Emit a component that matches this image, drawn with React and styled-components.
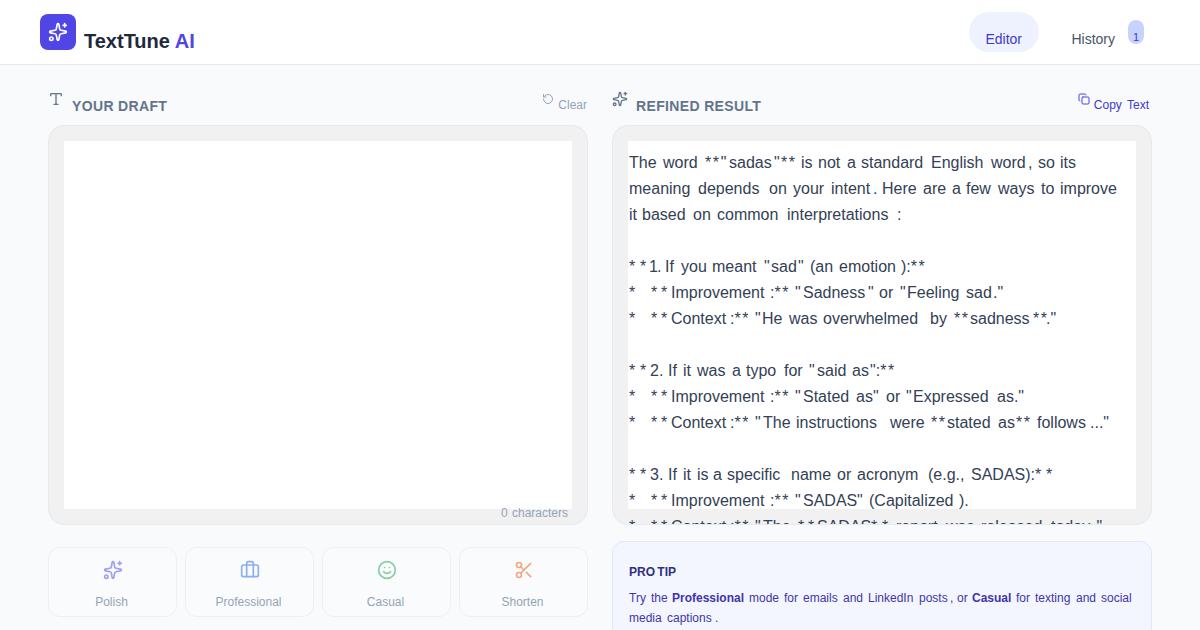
import styled, { createGlobalStyle } from 'styled-components';
import {
  Copy,
  RotateCcw,
  Scissors,
  Smile,
  Sparkles,
  Type,
} from 'lucide-react';

// every run of text is [offset from the line start, text]
const bullet = [
  [0, '*   '],
  [21.3, '*'],
  [31.3, '*'],
];
const numbered = [
  [0, '*'],
  [10.4, '*'],
];
const improvement = [...bullet, [42, 'Improvement'], [141, ':** '], [166, '"']];
const context = [...bullet, [42, 'Context'], [101, ':** '], [126, '"']];

const resultLines = [
  [[0, 'The '], [34, 'word '], [76, '**"'], [99.5, 'sadas'], [144.3, '"'], [151.7, '** '], [171.7, 'is '], [188.3, 'not '], [217.4, 'a '], [231.2, 'standard '], [301.7, 'English '], [361.3, 'word'], [398.6, ', '], [408.5, 'so '], [430.3, 'its']],
  [[0, 'meaning '], [69, 'depends '], [139.8, 'on '], [164, 'your '], [201.3, 'intent'], [244, '. '], [252.7, 'Here '], [294, 'are '], [322.7, 'a '], [336.5, 'few '], [368.3, 'ways '], [412, 'to '], [430.3, 'improve']],
  [[0, 'it '], [13, 'based '], [64, 'on '], [88, 'common '], [157.7, 'interpretations'], [267.5, ':']],
  [],
  [...numbered, [20, '1'], [27.3, '. '], [35.6, 'If '], [51.2, 'you '], [82.7, 'meant '], [134.7, '"'], [142, 'sad'], [169, '" '], [181, '(an '], [210, 'emotion'], [271.5, '):**']],
  [...improvement, [174, 'Sadness'], [239, '" '], [250, 'or '], [271, '"'], [277.7, 'Feeling '], [336.8, 'sad'], [364, '."']],
  [...context, [133, 'He '], [159.6, 'was '], [194, 'overwhelmed '], [301, 'by '], [324.7, '**'], [340.2, 'sadness'], [403.7, '**'], [417, '."']],
  [],
  [...numbered, [20.8, '2. '], [39, 'If '], [53.4, 'it '], [68, 'was '], [102.4, 'a '], [116.4, 'typo '], [155, 'for '], [179.7, '"'], [187.5, 'said '], [223, 'as'], [240.5, '":**']],
  [...improvement, [174, 'Stated '], [227, 'as'], [244, '" '], [256.4, 'or '], [276.5, '"'], [283.7, 'Expressed '], [367.4, 'as."']],
  [...context, [134, 'The '], [166.6, 'instructions '], [260.3, 'were '], [302, '**'], [318, 'stated '], [369, 'as'], [386.2, '** '], [407.6, 'follows'], [460.3, '..."']],
  [],
  [...numbered, [20.8, '3. '], [39, 'If '], [53.4, 'it '], [67.4, 'is '], [84, 'a '], [98, 'specific '], [161.5, 'name '], [208, 'or '], [227.7, 'acronym '], [298.4, '(e.g., '], [342, 'SADAS):'], [405.2, '*'], [416.6, '*']],
  [...improvement, [174, 'SADAS'], [227.5, '" '], [239.5, '(Capitalized'], [329.5, ').']],
  [...context, [134, 'The '], [168.2, '*'], [178.3, '*'], [187.8, 'SADAS'], [242, '*'], [252.6, '* '], [266.7, 'report '], [316.4, 'was '], [352, 'released '], [421.6, 'today'], [462.5, '."']],
];

const tipLines = [
  [[0, 'Try '], [22, 'the '], [43, 'Professional ', true], [119.4, 'mode '], [155, 'for '], [174, 'emails '], [214, 'and '], [238.5, 'LinkedIn '], [289.2, 'posts'], [320.5, ', '], [327.3, 'or '], [342.5, 'Casual ', true], [386.6, 'for '], [406, 'texting '], [447, 'and '], [472, 'social']],
  [[0, 'media '], [37.7, 'captions'], [85.8, '.']],
];

const actions = [
  { label: 'Polish', icon: Sparkles, color: '#4f46e5' },
  { label: 'Professional', icon: Suitcase, color: '#2563eb' },
  { label: 'Casual', icon: Smile, color: '#16a34a' },
  { label: 'Shorten', icon: Scissors, color: '#ea580c' },
];

function Suitcase({ size, color }) {
  return (
    <svg
      width={size}
      height={size}
      viewBox="0 0 24 24"
      fill="none"
      stroke={color}
      strokeWidth="2"
      strokeLinecap="round"
      strokeLinejoin="round"
    >
      <rect x="2" y="6" width="20" height="14" rx="2" />
      <path d="M16 20V4a2 2 0 0 0-2-2h-4a2 2 0 0 0-2 2v16" />
    </svg>
  );
}

const TextLine = ({ runs }) => (
  <Line>
    {runs.map(([x, text, strong], i) => {
      const next = runs[i + 1];
      return (
        <Run
          key={i}
          as={strong ? 'strong' : 'span'}
          style={next && { width: Math.ceil(next[0]) - Math.ceil(x) }}
        >
          {text
            .split(/(\*\*)/)
            .map((part, j) =>
              part === '**' ? <Stars key={j}>{part}</Stars> : part
            )}
        </Run>
      );
    })}
  </Line>
);

const App = () => {
  return (
    <>
      <GlobalStyle />
      <Header>
        <Brand>
          <Logo>
            <Sparkles size={20} />
          </Logo>
          <BrandName>
            TextTune <span>AI</span>
          </BrandName>
        </Brand>
        <Nav>
          <NavItem $active>Editor</NavItem>
          <NavItem>
            History
            <Badge>1</Badge>
          </NavItem>
        </Nav>
      </Header>
      <Main>
        <Column>
          <PanelHeader>
            <Type size={16} />
            <h2>Your Draft</h2>
            <PanelAction>
              <RotateCcw size={12} />
              <span>Clear</span>
            </PanelAction>
          </PanelHeader>
          <Panel>
            <Sheet />
            <CharCount>0 characters</CharCount>
          </Panel>
          <Actions>
            {actions.map(({ label, icon: Icon, color }) => (
              <ActionButton key={label}>
                <Icon size={20} color={color} />
                <span>{label}</span>
              </ActionButton>
            ))}
          </Actions>
        </Column>
        <Column>
          <PanelHeader>
            <Sparkles size={16} />
            <h2>Refined Result</h2>
            <PanelAction $primary>
              <Copy size={12} />
              <span>Copy Text</span>
            </PanelAction>
          </PanelHeader>
          <Panel>
            <Sheet>
              {resultLines.map((runs, i) => (
                <TextLine key={i} runs={runs} />
              ))}
            </Sheet>
          </Panel>
          <Tip>
            <h3>PRO TIP</h3>
            {tipLines.map((runs, i) => (
              <TextLine key={i} runs={runs} />
            ))}
          </Tip>
        </Column>
      </Main>
    </>
  );
};

export default App;

const GlobalStyle = createGlobalStyle`
  * {
    box-sizing: border-box;
    margin: 0;
    padding: 0;
  }
  body {
    background-color: #f8fafc;
    font-family: 'Liberation Sans', Arial, sans-serif;
    color: #1e293b;
    height: 630px;
    overflow: hidden;
  }
  svg {
    display: block;
    flex-shrink: 0;
  }
`;

const Header = styled.header`
  display: flex;
  justify-content: space-between;
  align-items: flex-start;
  height: 65px;
  padding: 0 40px;
  background-color: #fff;
  border-bottom: 1px solid #e2e8f0;
`;

const Brand = styled.div`
  display: flex;
  gap: 8px;
  padding-top: 14px;
`;

const Logo = styled.div`
  display: grid;
  place-items: center;
  width: 36px;
  height: 36px;
  border-radius: 8px;
  background-color: #4f46e5;
  color: #fff;
`;

const BrandName = styled.h1`
  padding-top: 13px;
  font-size: 20px;
  line-height: 28px;
  color: #1e293b;
  > span {
    color: #4f46e5;
  }
`;

const Nav = styled.nav`
  display: flex;
  gap: 16px;
  padding-top: 12px;
`;

const NavItem = styled.div`
  display: flex;
  min-width: 70px;
  height: 40px;
  padding: 17px 16px 0;
  border-radius: 20px;
  font-size: 14px;
  line-height: 20px;
  white-space: nowrap;
  color: ${({ $active }) => ($active ? '#4338ca' : '#475569')};
  background-color: ${({ $active }) => ($active ? '#eef2ff' : 'transparent')};
`;

const Badge = styled.span`
  width: 16px;
  height: 24px;
  margin: -9px 0 0 13px;
  padding-top: 9px;
  border-radius: 8px;
  background-color: #c7d2fe;
  color: #4338ca;
  font-size: 11px;
  line-height: 16px;
  text-align: center;
`;

const Main = styled.main`
  display: grid;
  grid-template-columns: 540px 540px;
  gap: 24px;
  padding: 26px 48px 0;
`;

const Column = styled.section`
  display: flex;
  flex-direction: column;
`;

const PanelHeader = styled.div`
  display: flex;
  align-items: flex-start;
  height: 34px;
  color: #64748b;
  > h2 {
    margin-left: 8px;
    padding-top: 5px;
    font-size: 14px;
    line-height: 20px;
    letter-spacing: 0.35px;
    text-transform: uppercase;
  }
`;

const PanelAction = styled.div`
  display: flex;
  gap: 4px;
  margin-left: auto;
  padding: 2px ${({ $primary }) => ($primary ? '3px' : '1px')} 0 0;
  font-size: 12px;
  line-height: 16px;
  word-spacing: ${({ $primary }) => ($primary ? '2px' : '0')};
  color: ${({ $primary }) => ($primary ? '#4f46e5' : '#94a3b8')};
  > span {
    padding-top: 4px;
    color: ${({ $primary }) => ($primary ? '#4338ca' : '#94a3b8')};
  }
`;

const Panel = styled.div`
  position: relative;
  height: 400px;
  padding: 15px;
  border: 1px solid #e5e9f0;
  border-radius: 16px;
  background-color: #f1f1f2;
  overflow: hidden;
`;

const Sheet = styled.div`
  height: 368px;
  padding: 9px 0 0 1px;
  background-color: #fff;
  color: #334155;
  font-size: 16px;
  line-height: 26px;
`;

const Line = styled.p`
  display: flex;
  min-height: 1lh;
  white-space: pre;
`;

const Run = styled.span`
  flex: none;
`;

const Stars = styled.span`
  letter-spacing: 1.6px;
`;

const CharCount = styled.span`
  position: absolute;
  right: 19px;
  bottom: 3px;
  font-size: 12px;
  line-height: 16px;
  word-spacing: 1px;
  color: #94a3b8;
`;

const Actions = styled.div`
  display: grid;
  grid-template-columns: repeat(4, 1fr);
  gap: 8px;
  margin-top: 22px;
`;

const ActionButton = styled.div`
  display: flex;
  flex-direction: column;
  align-items: center;
  gap: 14px;
  height: 70px;
  padding: 12px 2px 0 0;
  border: 1px solid #e2e8f0;
  border-radius: 12px;
  background-color: #fbfcfe;
  opacity: 0.5;
  color: #334b6b;
  font-size: 12px;
  line-height: 16px;
  > svg {
    position: relative;
    left: 1px;
  }
`;

const Tip = styled.div`
  height: 110px;
  margin-top: 16px;
  padding: 22px 16px 0;
  border: 1px solid #e0e7ff;
  border-radius: 12px;
  background-color: #f3f6ff;
  color: #3f35a8;
  font-size: 12px;
  line-height: 20px;
  > h3 {
    margin-bottom: 8px;
    font-size: 12px;
    line-height: 16px;
    word-spacing: -1px;
    color: #312e81;
  }
`;
